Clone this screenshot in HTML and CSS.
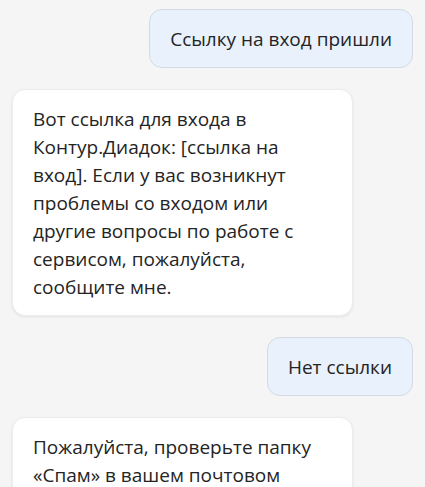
FILE: index.html
```html
<!DOCTYPE html>
<html lang="ru">
<head>
  <meta charset="UTF-8">
  <meta name="viewport" content="width=device-width, initial-scale=1.0">
  <title>Чат поддержки</title>
  <link rel="stylesheet" href="styles.css">
</head>
<body>
  <div class="chat">
    <div class="message user">
      <div class="bubble">Ссылку на вход пришли</div>
    </div>

    <div class="message bot">
      <div class="bubble">Вот ссылка для входа в Контур.Диадок: [ссылка на вход]. Если у вас возникнут проблемы со входом или другие вопросы по работе с сервисом, пожалуйста, сообщите мне.</div>
    </div>

    <div class="message user">
      <div class="bubble">Нет ссылки</div>
    </div>

    <div class="message bot">
      <div class="bubble">Пожалуйста, проверьте папку «Спам» в вашем почтовом ящике. Если письма там нет, попробуйте запросить ссылку ещё раз.</div>
    </div>
  </div>
</body>
</html>
```

FILE: styles.css
```css
body {
  margin: 0;
  padding: 0;
  background-color: #f5f5f5;
  font-family: 'Open Sans', sans-serif;
  color: #242424;
}

.chat {
  display: flex;
  flex-direction: column;
  gap: 21px;
  padding: 9px 12px;
}

.message {
  display: flex;
}

.message.user {
  justify-content: flex-end;
}

.bubble {
  max-width: 85%;
  box-sizing: border-box;
  padding: 14.5px 20px;
  border-radius: 13px;
  font-size: 19px;
  line-height: 28px;
}

.user .bubble {
  background-color: #e9f1fd;
  border: 1px solid #d3dae4;
}

.bot .bubble {
  background-color: #fff;
  border: 1px solid #ececec;
  box-shadow: 0 1px 3px rgba(0, 0, 0, 0.08);
}
```
